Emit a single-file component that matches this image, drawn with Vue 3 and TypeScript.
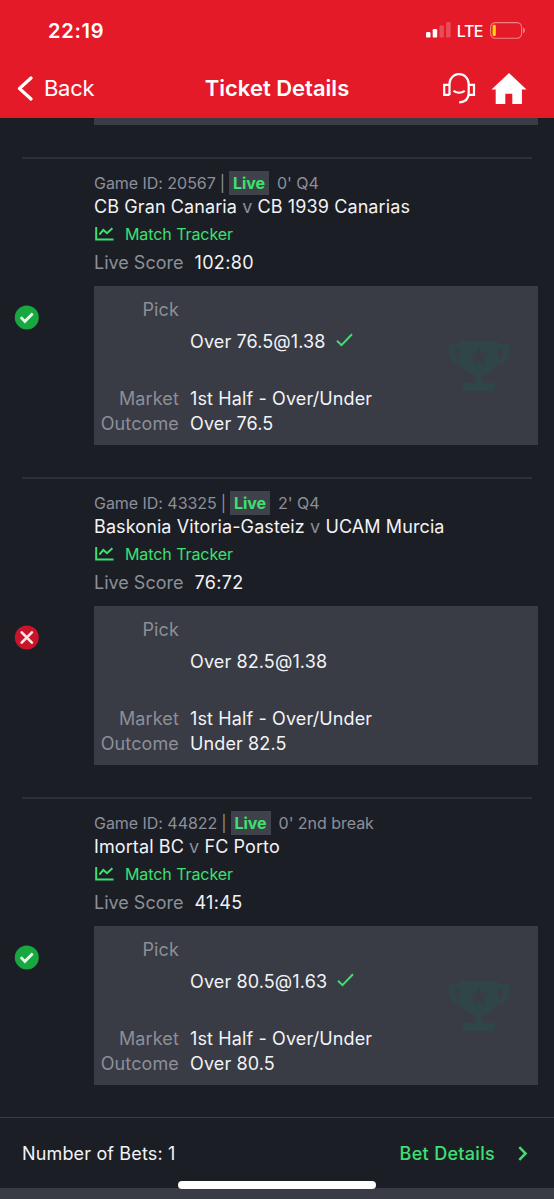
<script setup lang="ts">
interface Bet {
  id: string
  clock: string
  home: string
  away: string
  score: string
  pick: string
  outcome: string
  won: boolean
}

const bets: Bet[] = [
  { id: '20567', clock: "0' Q4", home: 'CB Gran Canaria', away: 'CB 1939 Canarias', score: '102:80', pick: 'Over 76.5@1.38', outcome: 'Over 76.5', won: true },
  { id: '43325', clock: "2' Q4", home: 'Baskonia Vitoria-Gasteiz', away: 'UCAM Murcia', score: '76:72', pick: 'Over 82.5@1.38', outcome: 'Under 82.5', won: false },
  { id: '44822', clock: "0' 2nd break", home: 'Imortal BC', away: 'FC Porto', score: '41:45', pick: 'Over 80.5@1.63', outcome: 'Over 80.5', won: true },
]
</script>

<template>
  <div class="screen">
    <header class="header">
      <div class="status">
        <span class="time">22:19</span>
        <div class="status-right">
          <svg class="signal" width="25" height="16" viewBox="0 0 25 16" fill="#fff">
            <rect x="0" y="10" width="4.5" height="5.6" rx="1.2" />
            <rect x="6.7" y="7" width="4.5" height="8.6" rx="1.2" />
            <rect x="13.4" y="3.5" width="4.5" height="12.1" rx="1.2" opacity=".22" />
            <rect x="20.1" y="0" width="4.5" height="15.6" rx="1.2" opacity=".22" />
          </svg>
          <span class="lte">LTE</span>
          <svg class="battery" width="36" height="17" viewBox="0 0 36 17" fill="none">
            <rect x=".6" y=".6" width="31" height="15.6" rx="4.6" stroke="#fff" stroke-opacity=".45" stroke-width="1.1" />
            <rect x="2.6" y="2.8" width="3.2" height="11.2" rx="1.2" fill="#ffd60a" />
            <path d="M33.2 5.6c2.2.7 2.2 5 0 5.7z" fill="#fff" fill-opacity=".5" />
          </svg>
        </div>
      </div>
      <nav class="nav">
        <div class="back">
          <svg width="16" height="26" viewBox="0 0 16 26" fill="none" stroke="#fff" stroke-width="3.2" stroke-linecap="round" stroke-linejoin="round"><path d="M14 2 2.500 12.500 14 23" /></svg>
          <span class="back-text">Back</span>
        </div>
        <h1 class="title">Ticket Details</h1>
        <div class="actions">
          <svg width="33" height="32" viewBox="0 0 33 32" fill="none" stroke="#fff" stroke-width="2.2">
            <path d="M6.500 22V10.700a9.600 9.600 0 0 1 19.200 0v9.300c0 6-3.300 9-9.500 9.300" />
            <path d="M6.500 11.900H1.200v9.900h5.300M25.700 11.900h5.300v9.900h-5.300" />
            <path d="M10.500 17.900q5.700 3.700 11.200 0" />
          </svg>
          <svg width="36" height="32" viewBox="0 0 36 32" fill="#fff"><path d="M18 0 .5 16.500h4.200V31h9.600V20.700h7V31h9.600V16.500h4.600z" /></svg>
        </div>
      </nav>
    </header>

    <main class="list">
      <div class="previous-panel"></div>
      <section v-for="bet in bets" :key="bet.id" class="bet">
        <div class="result">
          <svg v-if="bet.won" width="25" height="25" viewBox="0 0 25 25" fill="none">
            <circle cx="12.800" cy="12.500" r="12" fill="#17a840" />
            <path d="m6.800 12.100 4.100 4.300 7.800-7.800" stroke="#e6ffeb" stroke-width="2.800" />
          </svg>
          <svg v-else width="25" height="25" viewBox="0 0 25 25" fill="none">
            <circle cx="12.800" cy="12.500" r="12" fill="#c9152b" />
            <path d="m7.700 7.400 10.200 10.200M17.900 7.400 7.700 17.600" stroke="#ffe4e4" stroke-width="2.700" stroke-linecap="round" />
          </svg>
        </div>
        <div class="content">
          <div class="meta">
            <span>Game ID: {{ bet.id }}</span><span class="bar">|</span><span class="live">Live</span><span>{{ bet.clock }}</span>
          </div>
          <div class="teams">{{ bet.home }} <span class="versus">v</span> {{ bet.away }}</div>
          <div class="tracker">
            <svg width="20" height="14" viewBox="0 0 20 14" fill="none" stroke="#3ee070" stroke-width="2"><path d="M2.200 0v12.500H19.500M5.400 7.500l4-4.600L13 6.200l5.400-5" /></svg>
            <span>Match Tracker</span>
          </div>
          <div class="score"><span class="label">Live Score</span><span class="score-value">{{ bet.score }}</span></div>
          <div class="panel">
            <div class="label pick-label">Pick</div>
            <div class="value pick-value">
              <span>{{ bet.pick }}</span>
              <svg v-if="bet.won" width="17" height="14" viewBox="0 0 17 14" fill="none" stroke="#3ee070" stroke-width="2"><path d="m1 7.700 4.500 4.400L16 1.300" /></svg>
            </div>
            <div class="label">Market</div>
            <div class="value">1st Half - Over/Under</div>
            <div class="label outcome">Outcome</div>
            <div class="value outcome">{{ bet.outcome }}</div>
            <svg v-if="bet.won" class="trophy" width="60" height="52" viewBox="0 0 60 52">
              <path fill="#304646" fill-rule="evenodd" d="M11 1h38v3h11v9c0 7-4.500 11.500-12 12-3.200 6-8 9-14.500 10.500V43H46v8H14v-8h13v-7.500C20.500 34 15.500 31 12.300 25 4.500 24.500 0 20 0 13V4h11zM11 9H6v4c0 3.500 1.500 5.500 5 6.500zM49 9v10.500c3.500-1 5-3 5-6.500V9zM30 6l-2.800 6.700-7.200.6 5.500 4.700-1.700 7L30 21.300l6.200 3.700-1.700-7 5.500-4.700-7.200-.6z" />
            </svg>
          </div>
        </div>
      </section>
    </main>

    <footer class="footer">
      <span class="count">Number of Bets: 1</span>
      <div class="details">
        <span>Bet Details</span>
        <svg width="10" height="15" viewBox="0 0 10 15" fill="none" stroke="#3ee070" stroke-width="2.500"><path d="m1.300 1.200 6.300 6.300-6.300 6.300" /></svg>
      </div>
    </footer>
    <div class="bottom-strip"></div>
    <div class="home-indicator"></div>
  </div>
</template>

<style>
body {
  background: #1c1e26;
}
</style>

<style scoped>
.screen {
  position: relative;
  width: 554px;
  height: 1199px;
  overflow: hidden;
  display: flex;
  flex-direction: column;
  background: #1c1e26;
  color: #f2f3f5;
  font-family: Inter, "Liberation Sans", sans-serif;
  font-size: 18px;
  white-space: nowrap;
}
svg {
  display: block;
  flex: none;
}
.header {
  height: 118px;
  flex: none;
  box-sizing: border-box;
  background: #e51a28;
  color: #fff;
}
.status {
  height: 60px;
  display: flex;
  align-items: center;
  justify-content: space-between;
  padding: 0 28px 0 48px;
}
.time {
  margin-top: 2px;
  font-size: 20px;
  font-weight: 600;
  letter-spacing: .75px;
}
.status-right {
  display: flex;
  align-items: center;
}
.lte {
  margin: 2px 7px 0 6px;
  font-size: 16px;
  font-weight: 500;
  letter-spacing: -.5px;
}
.nav {
  height: 58px;
  display: grid;
  grid-template-columns: 1fr auto 1fr;
  align-items: center;
  padding: 0 27px 0 17px;
}
.back {
  display: flex;
  align-items: center;
  gap: 11px;
}
.back-text {
  font-size: 22px;
  letter-spacing: -.3px;
}
.back-text,
.title {
  margin-top: -2px;
}
.title {
  margin-left: 10px;
  margin-bottom: 0;
  font-size: 22px;
  font-weight: 600;
  letter-spacing: 0;
}
.actions {
  display: flex;
  justify-content: flex-end;
  gap: 15px;
}
.list {
  height: 999px;
  flex: none;
}
.previous-panel {
  height: 7px;
  margin: 0 16px 32px 94px;
  background: #393b45;
}
.bet {
  height: 320px;
  box-sizing: border-box;
  display: flex;
  position: relative;
}
.bet::before {
  content: "";
  position: absolute;
  top: 0;
  left: 22px;
  right: 22px;
  height: 2px;
  background: #2e3038;
}
.result {
  width: 94px;
  flex: none;
  box-sizing: border-box;
  padding: 148px 0 0 14px;
}
.content {
  width: 444px;
  padding-top: 14px;
}
.meta {
  height: 24px;
  display: flex;
  align-items: center;
  font-size: 16px;
  color: #8d8f98;
}
.bar {
  margin: 0 4px;
}
.live {
  height: 24px;
  line-height: 24px;
  padding: 0 4px;
  margin-right: 8px;
  background: #3f424b;
  color: #3ee070;
  font-weight: 700;
}
.meta > span {
  letter-spacing: -.04px;
}
.teams {
  height: 23px;
  line-height: 23px;
  letter-spacing: .1px;
}
.versus {
  color: #8d8f98;
}
.tracker {
  height: 31px;
  margin-bottom: 2px;
  display: flex;
  align-items: center;
  gap: 11px;
  color: #3ee070;
  font-size: 16px;
  letter-spacing: -.08px;
}
.score {
  height: 24px;
  line-height: 24px;
}
.label {
  color: #8d8f98;
}
.score-value {
  margin-left: 11px;
  letter-spacing: .35px;
}
.panel {
  position: relative;
  height: 159px;
  box-sizing: border-box;
  margin-top: 11px;
  padding-top: 11px;
  display: grid;
  grid-template-columns: 85px 1fr;
  grid-template-rows: 89px 25px 25px;
  column-gap: 11px;
  line-height: 25px;
  letter-spacing: .12px;
  background: #393b45;
}
.panel .label {
  text-align: right;
}
.pick-value {
  padding-top: 32px;
  display: flex;
  align-items: flex-start;
  gap: 10px;
}
.pick-value svg {
  margin-top: 4px;
}
.trophy {
  position: absolute;
  right: 29px;
  top: 54px;
}
.footer {
  height: 71px;
  flex: none;
  box-sizing: border-box;
  border-top: 1px solid #393b43;
  padding: 0 26px 0 22px;
  display: flex;
  align-items: center;
  justify-content: space-between;
}
.count {
  letter-spacing: .15px;
}
.details {
  display: flex;
  align-items: center;
  gap: 23px;
  color: #3ee070;
  font-weight: 500;
  letter-spacing: .3px;
}
.bottom-strip {
  height: 11px;
  background: #393b45;
}
.home-indicator {
  position: absolute;
  left: 178px;
  top: 1181px;
  width: 198px;
  height: 8px;
  border-radius: 4px;
  background: #fff;
}
</style>
